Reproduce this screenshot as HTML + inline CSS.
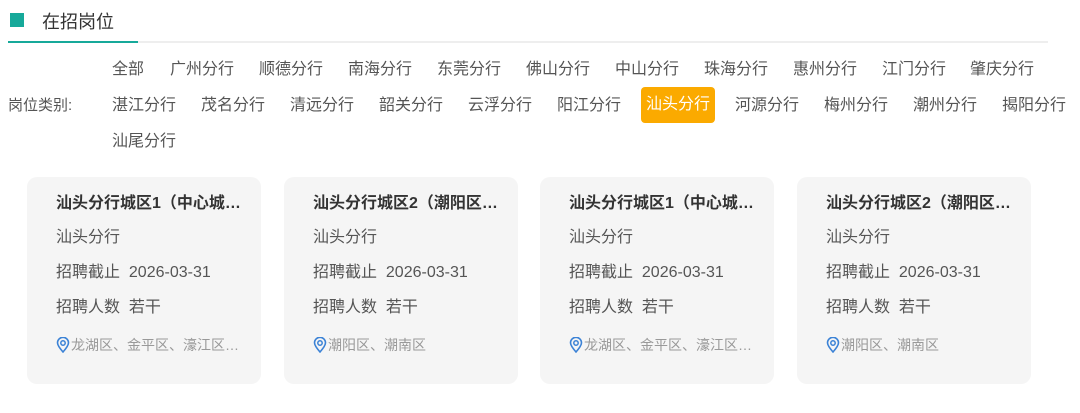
<!DOCTYPE html>
<html><head><meta charset="utf-8"><style>
*{margin:0;padding:0;box-sizing:border-box}
body{width:1080px;height:413px;background:#fff;font-family:"Liberation Sans","Noto Sans CJK SC",sans-serif;color:#555;position:relative;overflow:hidden}
.sq{position:absolute;left:10px;top:13px;width:14px;height:14px;background:#16a99a}
.ttl{position:absolute;left:42px;top:9px;font-size:18px;color:#333;line-height:26px}
.ln{position:absolute;left:8px;top:41px;width:1040px;height:2px;background:#eee}
.ln i{position:absolute;left:0;top:0;width:130px;height:2px;background:#16a99a}
.lbl{position:absolute;left:8px;top:96px;font-size:15px;line-height:20px}
.t{position:absolute;font-size:16px;line-height:20px;color:#555;white-space:nowrap}
.act{background:#fbaa00;color:#fff;border-radius:4px;padding:8px 5px;line-height:20px}
.card{position:absolute;top:177px;width:234px;height:207px;background:#f5f5f5;border-radius:10px;padding:0 0 0 29px}
.card div{position:absolute;left:29px;font-size:16px;line-height:20px;white-space:nowrap}
.card .h{top:17px;font-weight:bold;color:#333}
.card .a{top:51px}.card .b{top:86px}.card .c{top:121px}
.card .d{top:158px;font-size:14px;color:#999;left:29px}
.card svg{vertical-align:-3px;margin-right:1px}
</style></head><body>
<div class="sq"></div><div class="ttl">在招岗位</div>
<div class="ln"><i></i></div>
<div class="lbl">岗位类别:</div>
<span class="t" style="left:112px;top:60px">全部</span>
<span class="t" style="left:170px;top:60px">广州分行</span>
<span class="t" style="left:259px;top:60px">顺德分行</span>
<span class="t" style="left:348px;top:60px">南海分行</span>
<span class="t" style="left:437px;top:60px">东莞分行</span>
<span class="t" style="left:526px;top:60px">佛山分行</span>
<span class="t" style="left:615px;top:60px">中山分行</span>
<span class="t" style="left:704px;top:60px">珠海分行</span>
<span class="t" style="left:793px;top:60px">惠州分行</span>
<span class="t" style="left:882px;top:60px">江门分行</span>
<span class="t" style="left:970px;top:60px">肇庆分行</span>
<span class="t" style="left:112px;top:96px">湛江分行</span>
<span class="t" style="left:201px;top:96px">茂名分行</span>
<span class="t" style="left:290px;top:96px">清远分行</span>
<span class="t" style="left:379px;top:96px">韶关分行</span>
<span class="t" style="left:468px;top:96px">云浮分行</span>
<span class="t" style="left:557px;top:96px">阳江分行</span>
<span class="t act" style="left:641px;top:87px">汕头分行</span>
<span class="t" style="left:735px;top:96px">河源分行</span>
<span class="t" style="left:824px;top:96px">梅州分行</span>
<span class="t" style="left:913px;top:96px">潮州分行</span>
<span class="t" style="left:1002px;top:96px">揭阳分行</span>
<span class="t" style="left:112px;top:132px">汕尾分行</span>

<div class="card" style="left:27px"><div class="h">汕头分行城区1（中心城…</div><div class="a">汕头分行</div><div class="b">招聘截止&nbsp;&nbsp;2026-03-31</div><div class="c">招聘人数&nbsp;&nbsp;若干</div><div class="d"><svg width="14" height="16" viewBox="0 0 14 16"><path d="M7 15C3 10.5 1.5 8 1.5 5.8A5.5 5.5 0 0 1 12.5 5.8C12.5 8 11 10.5 7 15Z" fill="none" stroke="#3b82d6" stroke-width="1.6"/><circle cx="7" cy="6" r="2.2" fill="none" stroke="#3b82d6" stroke-width="1.5"/></svg>龙湖区、金平区、濠江区…</div></div>
<div class="card" style="left:284px"><div class="h">汕头分行城区2（潮阳区…</div><div class="a">汕头分行</div><div class="b">招聘截止&nbsp;&nbsp;2026-03-31</div><div class="c">招聘人数&nbsp;&nbsp;若干</div><div class="d"><svg width="14" height="16" viewBox="0 0 14 16"><path d="M7 15C3 10.5 1.5 8 1.5 5.8A5.5 5.5 0 0 1 12.5 5.8C12.5 8 11 10.5 7 15Z" fill="none" stroke="#3b82d6" stroke-width="1.6"/><circle cx="7" cy="6" r="2.2" fill="none" stroke="#3b82d6" stroke-width="1.5"/></svg>潮阳区、潮南区</div></div>
<div class="card" style="left:540px"><div class="h">汕头分行城区1（中心城…</div><div class="a">汕头分行</div><div class="b">招聘截止&nbsp;&nbsp;2026-03-31</div><div class="c">招聘人数&nbsp;&nbsp;若干</div><div class="d"><svg width="14" height="16" viewBox="0 0 14 16"><path d="M7 15C3 10.5 1.5 8 1.5 5.8A5.5 5.5 0 0 1 12.5 5.8C12.5 8 11 10.5 7 15Z" fill="none" stroke="#3b82d6" stroke-width="1.6"/><circle cx="7" cy="6" r="2.2" fill="none" stroke="#3b82d6" stroke-width="1.5"/></svg>龙湖区、金平区、濠江区…</div></div>
<div class="card" style="left:797px"><div class="h">汕头分行城区2（潮阳区…</div><div class="a">汕头分行</div><div class="b">招聘截止&nbsp;&nbsp;2026-03-31</div><div class="c">招聘人数&nbsp;&nbsp;若干</div><div class="d"><svg width="14" height="16" viewBox="0 0 14 16"><path d="M7 15C3 10.5 1.5 8 1.5 5.8A5.5 5.5 0 0 1 12.5 5.8C12.5 8 11 10.5 7 15Z" fill="none" stroke="#3b82d6" stroke-width="1.6"/><circle cx="7" cy="6" r="2.2" fill="none" stroke="#3b82d6" stroke-width="1.5"/></svg>潮阳区、潮南区</div></div>
</body></html>
